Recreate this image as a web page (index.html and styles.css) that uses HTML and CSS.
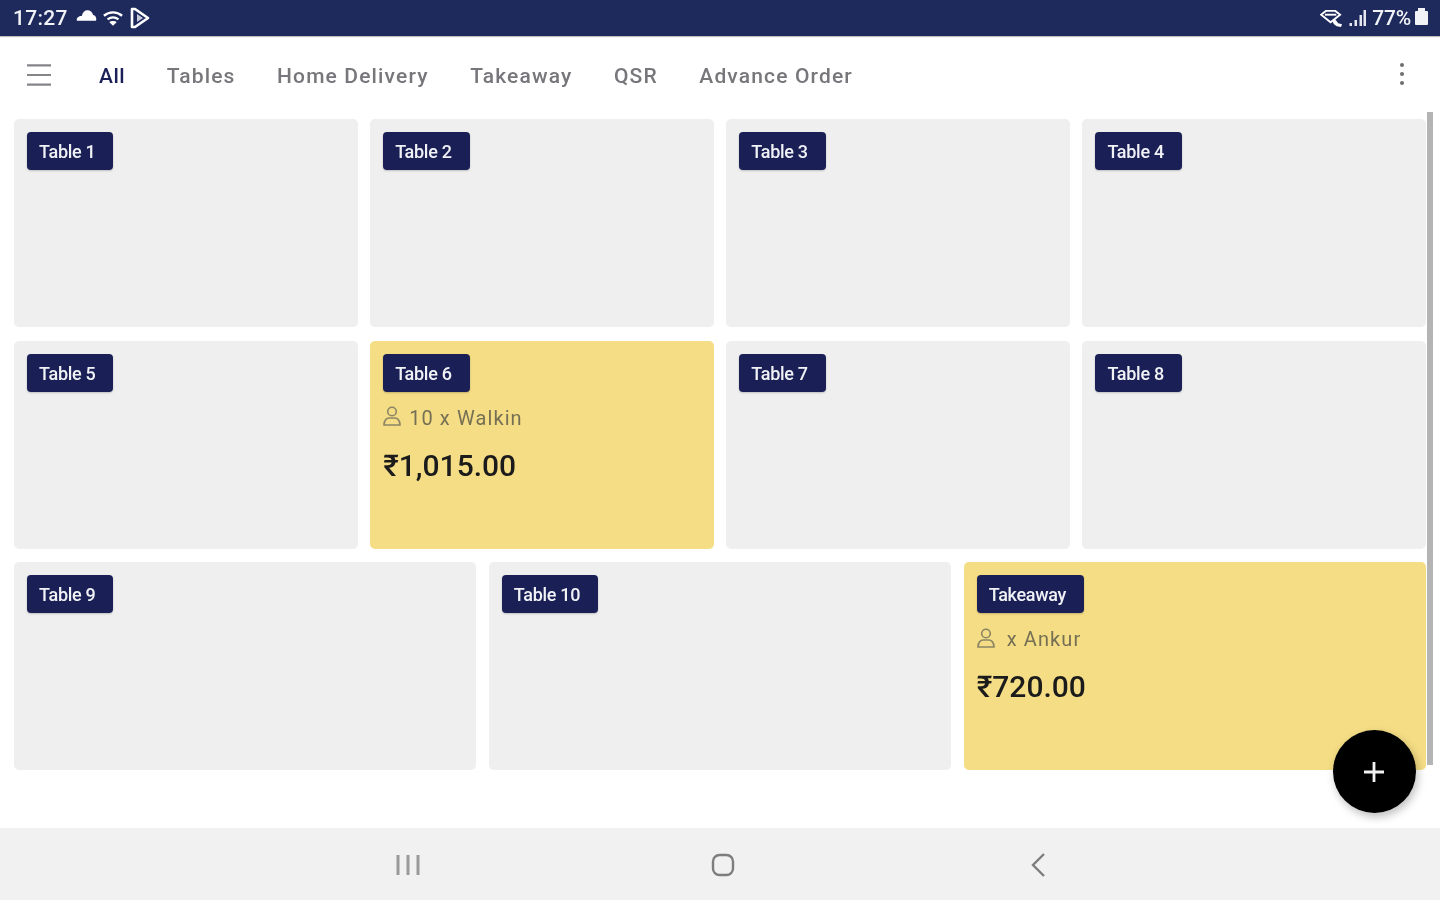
FILE: index.html
```html
<!DOCTYPE html>
<html>

<head>
  <meta charset="utf-8">
  <title>Tables</title>
  <link rel="stylesheet" href="styles.css">
</head>

<body>

  <div class="statusbar">
    <div class="status-left">
      <span class="clock">17:27</span>
      <svg class="icon-cloud" viewBox="0 0 22 12"><path d="M1 12c-1-3 2-5 5-5 1-4 3-6 6-6s5 2 6 5c2 0 4 3 3 6z" fill="#fff"/></svg>
      <svg class="icon-wifi" viewBox="0 0 22 16"><path d="M1 5c6-5 14-5 20 0M5 9c4-3 8-3 12 0" fill="none" stroke="#fff" stroke-width="2.600"/><path d="M7 12c2-1.500 6-1.500 8 0l-4 4z" fill="#fff"/></svg>
      <svg class="icon-play" viewBox="0 0 20 22"><path d="M2 2h3l13 9-13 9H2z" fill="none" stroke="#fff" stroke-width="2.600" stroke-linejoin="round"/><path d="M7 7l6 4-6 4z" fill="#c9cbdb"/></svg>
    </div>
    <div class="status-right">
      <svg class="icon-wifi-call" viewBox="0 0 26 20"><path d="M1 6l5-4h10l5 4-10 8z" fill="none" stroke="#fff" stroke-width="2"/><path d="M5 6h12" stroke="#fff" stroke-width="2"/><path d="M13 13l3-2 3 4 4 1-1 3c-4 0-8-2-9-6z" fill="#fff"/></svg>
      <svg class="icon-signal" viewBox="0 0 18 18"><path d="M1 14h2.500v3H1zM6 11h2.500v6H6zM11 6h2.500v11H11zM15 1h2.500v16H15z" fill="#e6e7ef"/></svg>
      <span class="battery-text">77%</span>
      <div class="battery"></div>
    </div>
  </div>

  <div class="topnav">
    <svg class="menu-icon" viewBox="0 0 26 24"><path d="M0 1.500h26M0 12h26M0 22.500h26" fill="none" stroke="#85858a" stroke-width="2.400"/></svg>
    <div class="tabs">
      <span class="tab active">All</span>
      <span class="tab">Tables</span>
      <span class="tab">Home Delivery</span>
      <span class="tab">Takeaway</span>
      <span class="tab">QSR</span>
      <span class="tab">Advance Order</span>
    </div>
    <div class="more">
      <i></i><i></i><i></i>
    </div>
  </div>

  <div class="floor">
    <div class="row">
      <div class="card"><span class="badge">Table 1</span></div>
      <div class="card"><span class="badge">Table 2</span></div>
      <div class="card"><span class="badge">Table 3</span></div>
      <div class="card"><span class="badge">Table 4</span></div>
    </div>
    <div class="row">
      <div class="card"><span class="badge">Table 5</span></div>
      <div class="card busy">
        <span class="badge">Table 6</span>
        <div class="guest">
          <svg class="person" viewBox="0 0 18 20"><circle cx="9" cy="5.500" r="4.300"/><path d="M1 19c0-5 3-7 5-7h6c2 0 5 2 5 7z"/></svg>
          <span>10 x Walkin</span>
        </div>
        <div class="price">₹1,015.00</div>
      </div>
      <div class="card"><span class="badge">Table 7</span></div>
      <div class="card"><span class="badge">Table 8</span></div>
    </div>
    <div class="row">
      <div class="card"><span class="badge">Table 9</span></div>
      <div class="card"><span class="badge">Table 10</span></div>
      <div class="card busy">
        <span class="badge">Takeaway</span>
        <div class="guest">
          <svg class="person" viewBox="0 0 18 20"><circle cx="9" cy="5.500" r="4.300"/><path d="M1 19c0-5 3-7 5-7h6c2 0 5 2 5 7z"/></svg>
          <span class="guest-name">x Ankur</span>
        </div>
        <div class="price">₹720.00</div>
      </div>
    </div>
    <div class="scroll-thumb"></div>
    <button class="fab">
      <svg viewBox="0 0 24 24"><path d="M12 2v20M2 12h20" fill="none" stroke="#f2f2f2" stroke-width="2.800"/></svg>
    </button>
  </div>

  <div class="navbar">
    <svg class="nav-icon" viewBox="0 0 24 22"><path d="M2 1v20M12 1v20M22 1v20" fill="none" stroke="#9a9a9a" stroke-width="3"/></svg>
    <svg class="nav-icon" viewBox="0 0 24 24"><rect x="2" y="2" width="20" height="20" rx="6.500" fill="none" stroke="#7d7d7d" stroke-width="2.400"/></svg>
    <svg class="nav-icon" viewBox="0 0 24 24"><path d="M18 1L7 12l11 11" fill="none" stroke="#7d7d7d" stroke-width="2.400"/></svg>
  </div>

</body>

</html>
```

FILE: styles.css
```css
* {
  box-sizing: border-box;
}

html,
body {
  margin: 0;
  height: 100%;
  overflow: hidden;
}

body {
  display: flex;
  flex-direction: column;
  height: 900px;
  background: #fff;
  font-family: Roboto, "Liberation Sans", sans-serif;
  filter: blur(0.7px);
}

/* Status bar */
.statusbar {
  display: flex;
  justify-content: space-between;
  align-items: center;
  height: 36px;
  padding: 0 12px 0 13px;
  background: #1f2a5c;
  color: #f2f3f7;
  box-shadow: 0 1px 1px rgba(0, 0, 0, 0.25);
}

.status-left,
.status-right {
  display: flex;
  align-items: center;
}

.clock {
  font-size: 21px;
  font-weight: 500;
  letter-spacing: 0.3px;
  margin-right: 8px;
}

.icon-cloud {
  width: 21px;
  height: 12px;
  margin: 0 6px 6px 0;
}

.icon-wifi {
  width: 20px;
  height: 15px;
  margin-right: 7px;
}

.icon-play {
  width: 20px;
  height: 22px;
}

.icon-wifi-call {
  width: 25px;
  height: 19px;
  margin-right: 3px;
}

.icon-signal {
  width: 19px;
  height: 18px;
  margin-right: 5px;
}

.battery-text {
  font-size: 21px;
  font-weight: 500;
  letter-spacing: -0.2px;
  margin-right: 4px;
}

.battery {
  position: relative;
  width: 13px;
  height: 14px;
  background: #f2f3f7;
  border-radius: 1px;
}

.battery:before {
  content: "";
  position: absolute;
  top: -3px;
  left: 3px;
  width: 7px;
  height: 3px;
  background: #f2f3f7;
}

/* Top tabs */
.topnav {
  display: flex;
  align-items: center;
  height: 83px;
  padding: 0 36px 4px 27px;
  flex-shrink: 0;
}

.menu-icon {
  width: 24px;
  height: 24px;
  margin-right: 48px;
  margin-top: -2px;
}

.tabs {
  display: flex;
  gap: 41.500px;
  flex: 1;
}

.tab {
  font-size: 21px;
  font-weight: 500;
  letter-spacing: 1.15px;
  color: #76767b;
}

.tab.active {
  letter-spacing: 0.5px;
  color: #1b2158;
}

.more {
  display: flex;
  flex-direction: column;
  gap: 5px;
  margin-top: -3px;
}

.more i {
  display: block;
  width: 4px;
  height: 4px;
  border-radius: 50%;
  background: #6e6e72;
}

/* Table grid */
.floor {
  position: relative;
  display: flex;
  flex-direction: column;
  gap: 13.500px;
  padding: 0 14px;
}

.row {
  display: flex;
  gap: 12.500px;
}

.card {
  flex: 1;
  height: 208px;
  padding: 13px;
  background: #efefef;
  border-radius: 5px;
}

.card.busy {
  background: #f5dd85;
}

.badge {
  display: inline-block;
  height: 38px;
  padding: 0 18px 0 12px;
  background: #1a2055;
  border-radius: 4px;
  box-shadow: 0 1px 2px rgba(0, 0, 0, 0.2);
  color: #f1f2f6;
  font-size: 18px;
  font-weight: 500;
  letter-spacing: -0.3px;
  line-height: 39px;
}

.guest {
  display: flex;
  align-items: center;
  gap: 8px;
  margin-top: 14px;
  color: #757054;
  font-size: 20px;
  letter-spacing: 1.1px;
}

.guest-name {
  margin-left: 4px;
}

.person {
  width: 18px;
  height: 20px;
  margin-top: -3px;
  fill: none;
  stroke: #8b8564;
  stroke-width: 1.600;
}

.price {
  margin-top: 18px;
  color: #1b1b1b;
  font-size: 30px;
  font-weight: 500;
  line-height: 36px;
}

.scroll-thumb {
  position: absolute;
  top: -7px;
  right: 7px;
  width: 6px;
  height: 653px;
  background: #b4b4b4;
}

.fab {
  position: absolute;
  top: 611px;
  right: 24px;
  display: flex;
  align-items: center;
  justify-content: center;
  width: 83px;
  height: 83px;
  padding: 0;
  border: 0;
  border-radius: 50%;
  background: #000;
  box-shadow: 2px 4px 8px rgba(0, 0, 0, 0.25);
}

.fab svg {
  width: 24px;
  height: 24px;
  margin-left: -2px;
}

/* Android nav */
.navbar {
  display: flex;
  align-items: center;
  justify-content: center;
  gap: 291px;
  height: 72px;
  margin-top: auto;
  padding: 2px 0 0 6px;
  background: #f1f1f1;
}

.nav-icon {
  width: 24px;
  height: 24px;
}
```
